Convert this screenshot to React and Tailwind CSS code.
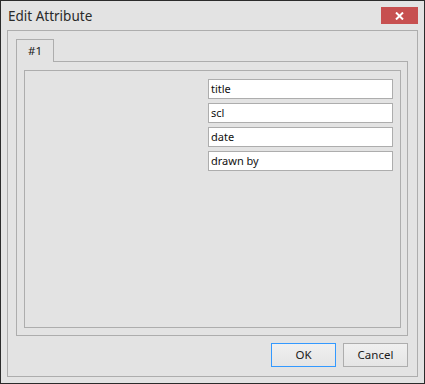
import React from "react";

const fields = ["title", "scl", "date", "drawn by"];

function CloseButton() {
  return (
    <button className="flex h-[17px] w-[37px] items-center justify-center bg-[#c75050]">
      <svg width="9" height="8" viewBox="0 0 9 8">
        <path d="M1 0.5 L8 7.5 M8 0.5 L1 7.5" stroke="#ffffff" strokeWidth="2" />
      </svg>
    </button>
  );
}

export default function App() {
  return (
    <div
      className="flex h-[384px] w-[425px] flex-col border border-[#2b2b2b] bg-[#e3e3e3] px-[6px] pb-[6px]"
      style={{ fontFamily: '"Noto Sans", "Open Sans", Arial, sans-serif' }}
    >
      {/* title bar */}
      <div className="flex h-[29px] shrink-0 items-start justify-between">
        <span className="ml-[1px] mt-[6px] text-[13.5px] leading-[18px] text-[#2a2a2a]">Edit Attribute</span>
        <div className="mt-[6px]">
          <CloseButton />
        </div>
      </div>

      {/* main panel */}
      <div className="flex flex-1 flex-col border border-[#adadad] pl-[8px] pr-[9px] pt-[8px] pb-[9px]">
        <div className="relative z-10 -mb-px flex h-[23px] w-[38px] items-center justify-center border border-b-0 border-[#adadad] bg-[#e3e3e3] text-[11.5px] text-[#1a1a1a]">
          #1
        </div>
        <div className="h-[275px] border border-[#adadad] pb-[7px] pl-[7px] pr-[6px] pt-[8px]">
          <div className="flex h-full flex-col items-end gap-[4px] border border-[#adadad] pr-[7px] pt-[8px]">
            {fields.map((f) => (
              <div
                key={f}
                className="flex h-[20px] w-[185px] items-center border border-[#adadad] bg-white pl-[2px] text-[11px] text-[#111]"
              >
                {f}
              </div>
            ))}
          </div>
        </div>

        <div className="mt-[7px] flex justify-end gap-[7px]">
          <button className="h-[24px] w-[65px] border border-[#3399ff] bg-gradient-to-b from-[#f0f0f0] to-[#e5e5e5] text-[11.5px] text-[#1a1a1a]">
            OK
          </button>
          <button className="h-[24px] w-[65px] border border-[#adadad] bg-gradient-to-b from-[#f0f0f0] to-[#e5e5e5] text-[11.5px] text-[#1a1a1a]">
            Cancel
          </button>
        </div>
      </div>
    </div>
  );
}
